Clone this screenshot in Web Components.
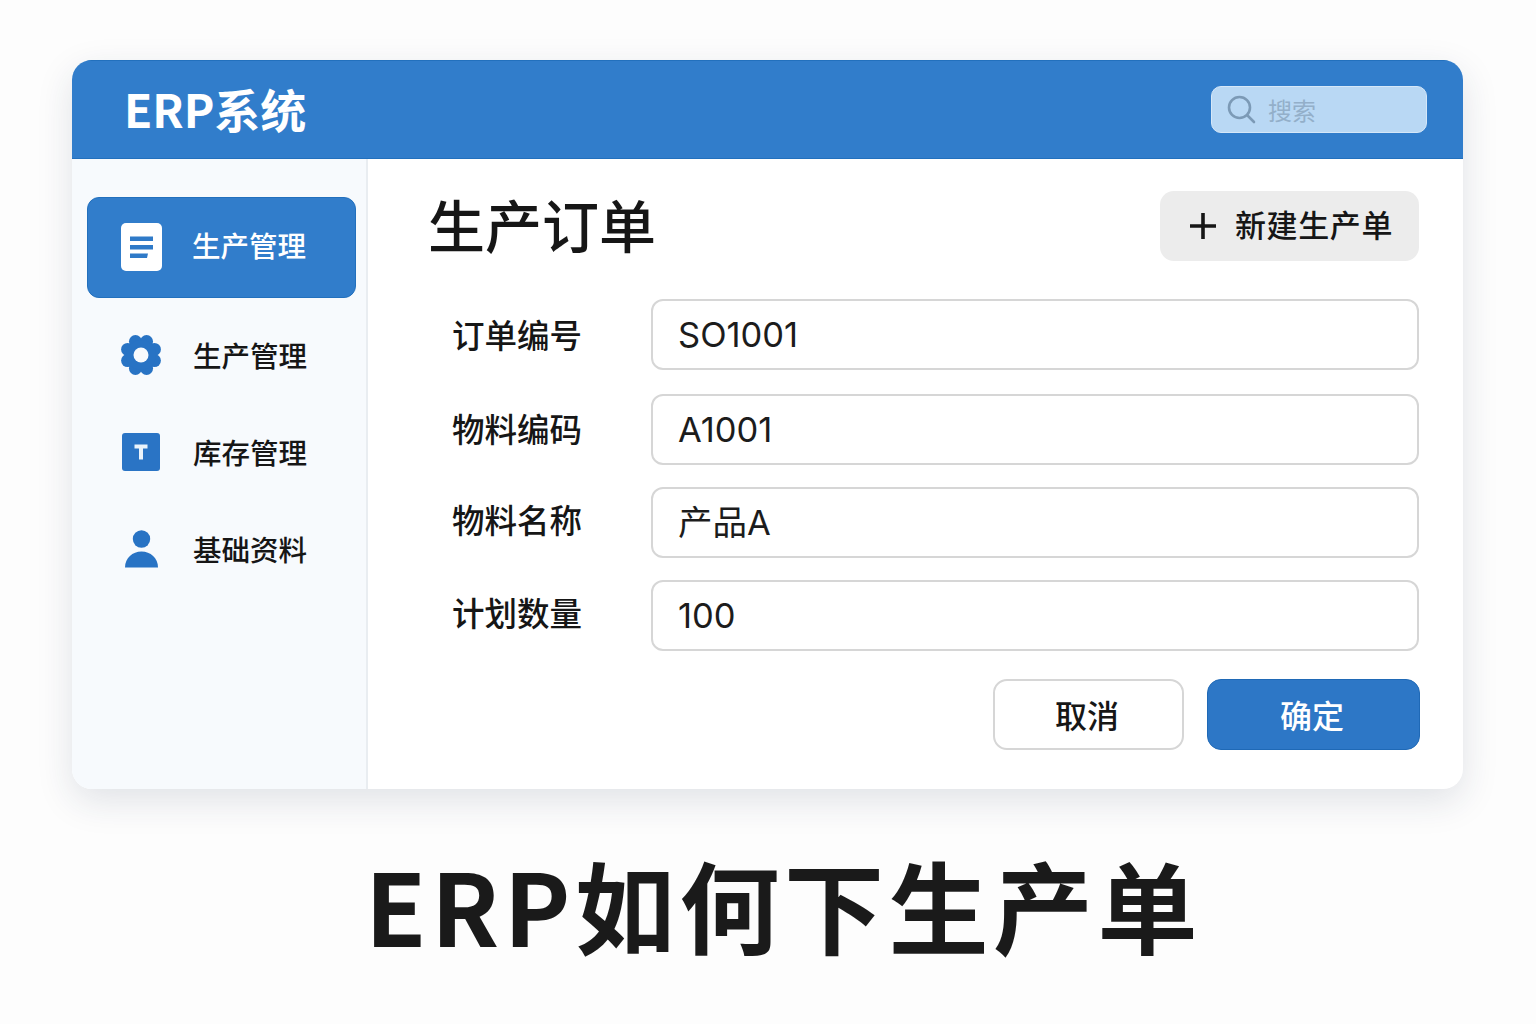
<!DOCTYPE html>
<html lang="zh">
<head>
<meta charset="utf-8">
<title>ERP如何下生产单</title>
<style>
html, body { margin: 0; padding: 0; }
body {
    width: 1536px;
    height: 1024px;
    overflow: hidden;
    background: #fdfdfd;
    font-family: "Noto Sans CJK SC", "Noto Sans", sans-serif;
    color: #161616;
}
</style>
</head>
<body>
<erp-page>
    <erp-window>
        <erp-header slot="header" title-text="ERP系统"></erp-header>
        <side-nav slot="nav">
            <nav-item icon="doc" active>生产管理</nav-item>
            <nav-item icon="gear">生产管理</nav-item>
            <nav-item icon="box">库存管理</nav-item>
            <nav-item icon="user">基础资料</nav-item>
        </side-nav>
        <order-form slot="main">
            <form-row label="订单编号" value="SO1001" lift="2"></form-row>
            <form-row label="物料编码" value="A1001" gap="24" lift="4"></form-row>
            <form-row label="物料名称" value="产品A" gap="22" lift="8"></form-row>
            <form-row label="计划数量" value="100" gap="22" lift="8"></form-row>
        </order-form>
    </erp-window>
    <page-caption>ERP如何下生产单</page-caption>
</erp-page>

<script>
class ErpPage extends HTMLElement {
    constructor() {
        super();
        this.attachShadow({mode: "open"}).innerHTML = `
            <style>
            :host {
                display: flex;
                flex-direction: column;
                padding: 60px 73px 0 72px;
            }
            </style>
            <slot></slot>`;
    }
}

class ErpWindow extends HTMLElement {
    constructor() {
        super();
        this.attachShadow({mode: "open"}).innerHTML = `
            <style>
            :host {
                display: block;
                height: 729px;
                border-radius: 20px;
                background: #fff;
                box-shadow: 0 12px 36px rgba(30, 50, 80, 0.13);
                overflow: hidden;
            }
            .body {
                display: flex;
                height: 630px;
            }
            </style>
            <slot name="header"></slot>
            <div class="body">
                <slot name="nav"></slot>
                <slot name="main"></slot>
            </div>`;
    }
}

class ErpHeader extends HTMLElement {
    constructor() {
        super();
        this.attachShadow({mode: "open"}).innerHTML = `
            <style>
            :host {
                display: flex;
                align-items: center;
                justify-content: space-between;
                box-sizing: border-box;
                height: 99px;
                padding: 0 36px 0 52px;
                background: #317dcb;
                border-top: 1px solid #2270bd;
                border-bottom: 1px solid #2270bd;
            }
            h1 {
                margin: 0 0 4px;
                color: #fff;
                font-size: 46px;
                font-weight: 700;
                line-height: 1;
            }
            .search {
                display: flex;
                align-items: center;
                gap: 12px;
                box-sizing: border-box;
                width: 216px;
                height: 47px;
                margin-bottom: 1px;
                padding-left: 14px;
                border-radius: 10px;
                border: 1px solid #d5e7f8;
                background: #b9d8f4;
                color: #93afc9;
                font-size: 24px;
            }
            svg { display: block; }
            </style>
            <h1>${this.getAttribute("title-text")}</h1>
            <div class="search">
                <svg width="30" height="30" viewBox="0 0 30 30" fill="none" stroke="#7c9ab6" stroke-width="2.6" stroke-linecap="round">
                    <circle cx="13.5" cy="13.5" r="10.5"/>
                    <path d="M21.5 21.5 L28 28"/>
                </svg>
                <span>搜索</span>
            </div>`;
    }
}

class SideNav extends HTMLElement {
    constructor() {
        super();
        this.attachShadow({mode: "open"}).innerHTML = `
            <style>
            :host {
                display: flex;
                flex-direction: column;
                box-sizing: border-box;
                width: 296px;
                flex: none;
                padding: 38px 10px 0 15px;
                background: #f7fafd;
                border-right: 2px solid #e9edf1;
            }
            </style>
            <slot></slot>`;
    }
}

const gearLobes = [22.5, 67.5, 112.5, 157.5, 202.5, 247.5, 292.5, 337.5].map(a => {
    const r = a * Math.PI / 180;
    return `<circle cx="${(21 + 14.5 * Math.cos(r)).toFixed(2)}" cy="${(21 + 14.5 * Math.sin(r)).toFixed(2)}" r="6.5"/>`;
}).join("");

const NAV_ICONS = {
    doc: `<svg width="41" height="48" viewBox="0 0 41 48">
            <rect x="0" y="0" width="41" height="48" rx="5" fill="#fff"/>
            <path d="M9 13.500H32V18H9Z M9 22H32V26.500H9Z M9 30.500H27L26 35H9Z" fill="#2f7ac8"/>
          </svg>`,
    gear: `<svg width="42" height="42" viewBox="0 0 42 42">
            <g fill="#2873c4">${gearLobes}<circle cx="21" cy="21" r="15"/></g>
            <circle cx="21" cy="21" r="7.500" fill="#f7fafd"/>
          </svg>`,
    box: `<svg width="38" height="38" viewBox="0 0 38 38">
            <rect width="38" height="38" rx="3" fill="#2a74c5"/>
            <path d="M12.500 11.500H25.500V15.500H21V26.500H17V15.500H12.500Z" fill="#eaf3fb"/>
          </svg>`,
    user: `<svg width="33" height="38" viewBox="0 0 33 38">
            <circle cx="16.500" cy="9" r="8.700" fill="#2873c4"/>
            <path d="M0 37.500C0 28 7.500 21.500 16.500 21.500S33 28 33 37.500Z" fill="#2873c4"/>
          </svg>`
};

class NavItem extends HTMLElement {
    constructor() {
        super();
        const active = this.hasAttribute("active");
        this.attachShadow({mode: "open"}).innerHTML = `
            <style>
            :host {
                display: flex;
                align-items: center;
                box-sizing: border-box;
                height: ${active ? 101 : 97}px;
                flex: none;
                padding-left: 33px;
                border-radius: 12px;
                font-size: 28.5px;
                font-weight: 500;
            }
            :host([active]) {
                background: #317dcb;
                border: 1px solid #2270bd;
                color: #fff;
                margin-bottom: 8px;
                padding-left: 32px;
            }
            .icon {
                display: flex;
                justify-content: center;
                width: 42px;
                margin-right: 31px;
            }
            :host([active]) .icon {
                margin-right: 30px;
                margin-bottom: 2px;
            }
            :host([active]) .label {
                margin-bottom: 6px;
            }
            svg { display: block; }
            </style>
            <span class="icon">${NAV_ICONS[this.getAttribute("icon")]}</span>
            <span class="label"><slot></slot></span>`;
    }
}

class OrderForm extends HTMLElement {
    constructor() {
        super();
        this.attachShadow({mode: "open"}).innerHTML = `
            <style>
            :host {
                display: block;
                flex: 1;
                box-sizing: border-box;
                padding: 31px 44px 0 62px;
            }
            .top {
                display: flex;
                justify-content: space-between;
                align-items: center;
                height: 71px;
                margin-bottom: 38px;
            }
            h2 {
                margin: 0 0 4px -2px;
                font-size: 57px;
                font-weight: 500;
                line-height: 1;
                color: #161616;
            }
            .rows {
                display: block;
                margin-left: 20px;
            }
            .actions {
                display: flex;
                justify-content: flex-end;
                gap: 23px;
                margin-top: 28px;
                margin-right: -1px;
            }
            </style>
            <div class="top">
                <h2>生产订单</h2>
                <erp-button kind="soft">新建生产单</erp-button>
            </div>
            <div class="rows"><slot></slot></div>
            <div class="actions">
                <erp-button kind="outline">取消</erp-button>
                <erp-button kind="primary">确定</erp-button>
            </div>`;
    }
}

class FormRow extends HTMLElement {
    constructor() {
        super();
        const gap = this.getAttribute("gap") || 0;
        const lift = this.getAttribute("lift") || 0;
        this.attachShadow({mode: "open"}).innerHTML = `
            <style>
            :host {
                display: flex;
                align-items: center;
                margin-top: ${gap}px;
            }
            label {
                box-sizing: border-box;
                width: 201px;
                flex: none;
                margin-bottom: ${lift}px;
                padding-left: 2px;
                font-size: 32.5px;
                font-weight: 500;
                white-space: nowrap;
            }
            .input {
                box-sizing: border-box;
                flex: 1;
                height: 71px;
                padding-left: 25px;
                border: 2px solid #d6d6d6;
                border-radius: 12px;
                background: #fff;
                font-family: "Inter", "Noto Sans CJK SC", sans-serif;
                font-size: 34.5px;
                line-height: 67px;
                color: #1c1c1c;
            }
            </style>
            <label>${this.getAttribute("label")}</label>
            <div class="input">${this.getAttribute("value")}</div>`;
    }
}

class ErpButton extends HTMLElement {
    constructor() {
        super();
        const soft = this.getAttribute("kind") === "soft";
        this.attachShadow({mode: "open"}).innerHTML = `
            <style>
            :host {
                display: inline-flex;
                align-items: center;
                justify-content: center;
                box-sizing: border-box;
                height: 71px;
                border-radius: 14px;
                font-size: 32px;
                font-weight: 500;
            }
            :host([kind="soft"]) {
                width: 259px;
                height: 70px;
                justify-content: flex-start;
                padding-left: 30px;
                gap: 19px;
                background: #ececec;
                color: #161616;
                font-size: 31px;
                letter-spacing: 0.6px;
            }
            :host([kind="soft"]) span { margin-bottom: 5px; }
            :host([kind="outline"]) {
                width: 191px;
                padding-right: 3px;
                background: #fff;
                border: 2px solid #d6d6d6;
                color: #161616;
            }
            :host([kind="outline"]) span { margin-bottom: 2px; }
            :host([kind="primary"]) {
                width: 213px;
                padding-right: 3px;
                background: #2d77c6;
                border: 1px solid #1f69b6;
                color: #fff;
            }
            :host([kind="primary"]) span { margin-bottom: 2px; }
            svg { display: block; }
            </style>
            ${soft ? `<svg width="26" height="26" viewBox="0 0 26 26"><path d="M11.200 0H14.800V11.200H26V14.800H14.800V26H11.200V14.800H0V11.200H11.200Z" fill="#161616"/></svg>` : ""}
            <span><slot></slot></span>`;
    }
}

class PageCaption extends HTMLElement {
    constructor() {
        super();
        this.attachShadow({mode: "open"}).innerHTML = `
            <style>
            :host {
                display: block;
                margin-top: 50px;
                padding-left: 32px;
                text-align: center;
                font-size: 100px;
                font-weight: 700;
                letter-spacing: 4.5px;
                line-height: 130px;
                color: #1a1a1a;
                white-space: nowrap;
            }
            </style>
            <slot></slot>`;
    }
}

customElements.define("erp-page", ErpPage);
customElements.define("erp-window", ErpWindow);
customElements.define("erp-header", ErpHeader);
customElements.define("side-nav", SideNav);
customElements.define("nav-item", NavItem);
customElements.define("order-form", OrderForm);
customElements.define("form-row", FormRow);
customElements.define("erp-button", ErpButton);
customElements.define("page-caption", PageCaption);
</script>
</body>
</html>
